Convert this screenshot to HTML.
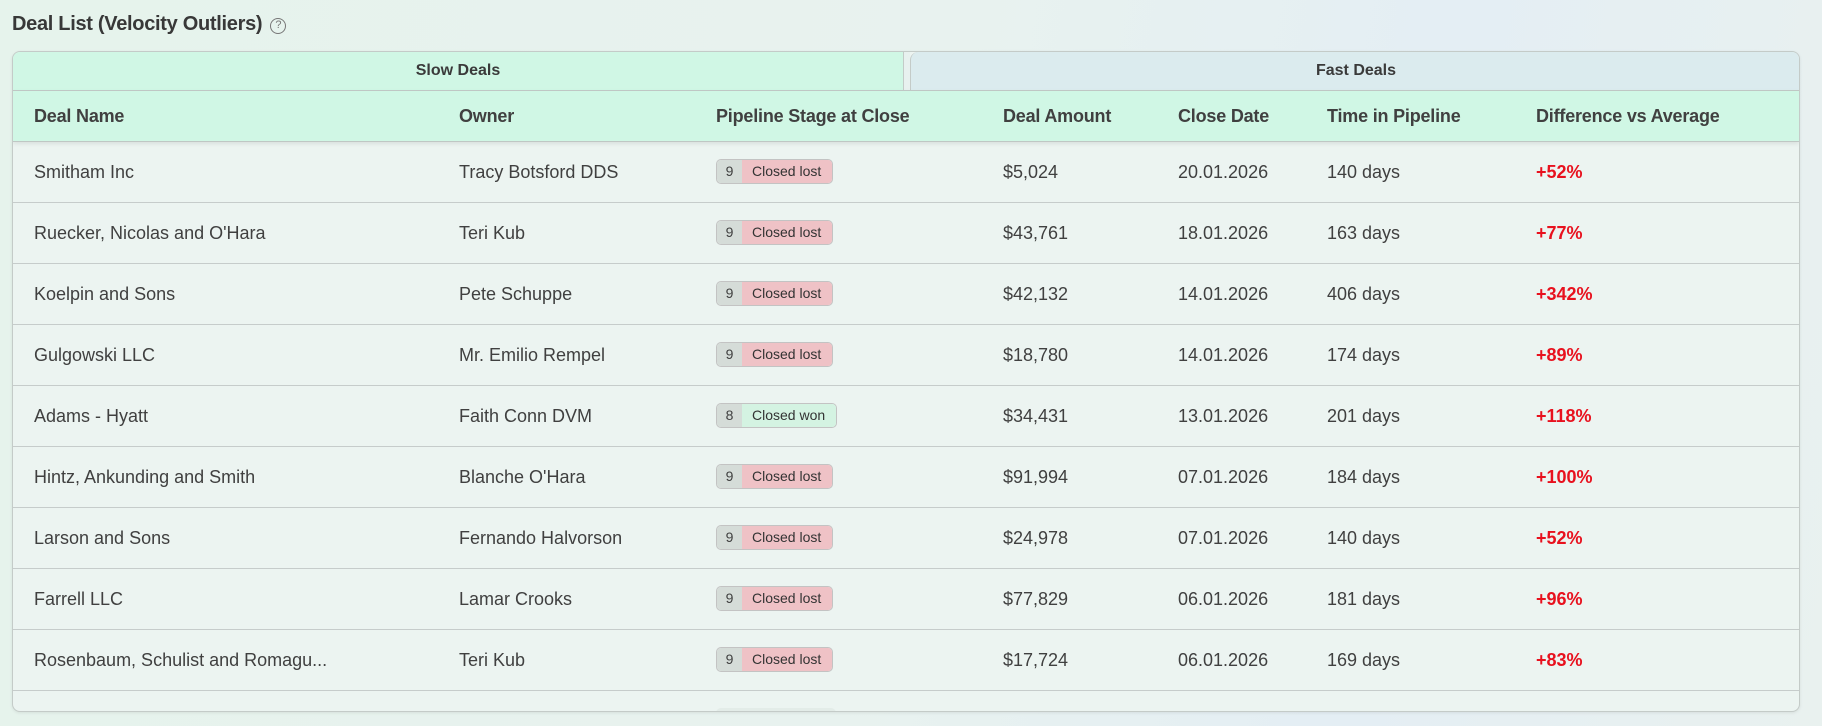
<!DOCTYPE html>
<html><head><meta charset="utf-8"><style>
*{box-sizing:border-box;margin:0;padding:0}
body{width:1822px;height:726px;overflow:hidden;font-family:"Liberation Sans",sans-serif;color:#3a3a3a;background:linear-gradient(100deg,#e6f3ec 0%,#e8f2ef 50%,#e4eef4 75%,#e9f1ef 100%);position:relative}
.title{position:absolute;left:12px;top:13px;font-size:20px;font-weight:bold;color:#383838;letter-spacing:-0.3px}
.q{display:inline-block;width:16px;height:16px;border:1.5px solid #777;border-radius:50%;font-size:11px;text-align:center;line-height:13px;color:#777;font-weight:normal;vertical-align:2px;margin-left:8px}
.card{position:absolute;left:12px;top:51px;width:1788px;height:661px;border:1px solid #c4cbc8;border-radius:8px;background:#ecf4f1;overflow:hidden;box-shadow:0 1px 3px rgba(0,0,0,.08)}
.tab{position:absolute;top:0;height:38px;font-size:16px;font-weight:bold;text-align:center;line-height:38px;color:#3a3a3a}
.t1{left:0;width:891px;background:#d0f7e5;border-right:1px solid #c4cbc8}
.t2{left:897px;width:891px;background:#dbebee;border-left:1px solid #c4cbc8;border-radius:8px 8px 0 0}
.gap{position:absolute;left:891px;top:0;width:6px;height:38px;background:#e8f1ef}
.hdr{position:absolute;left:0;top:38px;width:100%;height:52px;background:#d0f7e5;border-top:1px solid #bfc7c4;border-bottom:1px solid #bfc7c4;box-shadow:0 2px 4px rgba(0,0,0,.08)}
.c{position:absolute;white-space:nowrap}
.hdr .c{top:15px;font-size:18px;font-weight:bold;color:#404040;letter-spacing:-0.2px}
.row{position:absolute;left:0;width:100%;height:61px;border-bottom:1px solid #c6cccb}
.row .c{top:20px;font-size:18px;color:#404040}
.x1{left:21px}.x2{left:446px}.x3{left:703px}.x4{left:990px}.x5{left:1165px}.x6{left:1314px}.x7{left:1523px}
.red{color:#e8111e!important;font-weight:bold}
.b{top:17px!important;height:25px;border:1px solid #c3c3c3;border-radius:5px;overflow:hidden;display:flex;font-size:14px!important;line-height:23px}
.b .n{background:#d5dcd8;width:25px;text-align:center}
.b .l{background:#efc2c6;padding:0 11px 0 10px;color:#333}
.b .w{background:#d4f3e2;padding:0 11px 0 10px;color:#333}
</style></head><body>
<div class="title">Deal List (Velocity Outliers)<span class="q">?</span></div>
<div class="card">
<div class="tab t1">Slow Deals</div><div class="gap"></div><div class="tab t2">Fast Deals</div>
<div class="hdr"><span class="c x1">Deal Name</span><span class="c x2">Owner</span><span class="c x3">Pipeline Stage at Close</span><span class="c x4">Deal Amount</span><span class="c x5">Close Date</span><span class="c x6">Time in Pipeline</span><span class="c x7">Difference vs Average</span></div>

<div class="row" style="top:90px"><span class="c x1">Smitham Inc</span><span class="c x2">Tracy Botsford DDS</span><span class="c x3 b"><span class="n">9</span><span class="l">Closed lost</span></span><span class="c x4">$5,024</span><span class="c x5">20.01.2026</span><span class="c x6">140 days</span><span class="c x7 red">+52%</span></div>
<div class="row" style="top:151px"><span class="c x1">Ruecker, Nicolas and O'Hara</span><span class="c x2">Teri Kub</span><span class="c x3 b"><span class="n">9</span><span class="l">Closed lost</span></span><span class="c x4">$43,761</span><span class="c x5">18.01.2026</span><span class="c x6">163 days</span><span class="c x7 red">+77%</span></div>
<div class="row" style="top:212px"><span class="c x1">Koelpin and Sons</span><span class="c x2">Pete Schuppe</span><span class="c x3 b"><span class="n">9</span><span class="l">Closed lost</span></span><span class="c x4">$42,132</span><span class="c x5">14.01.2026</span><span class="c x6">406 days</span><span class="c x7 red">+342%</span></div>
<div class="row" style="top:273px"><span class="c x1">Gulgowski LLC</span><span class="c x2">Mr. Emilio Rempel</span><span class="c x3 b"><span class="n">9</span><span class="l">Closed lost</span></span><span class="c x4">$18,780</span><span class="c x5">14.01.2026</span><span class="c x6">174 days</span><span class="c x7 red">+89%</span></div>
<div class="row" style="top:334px"><span class="c x1">Adams - Hyatt</span><span class="c x2">Faith Conn DVM</span><span class="c x3 b"><span class="n">8</span><span class="w">Closed won</span></span><span class="c x4">$34,431</span><span class="c x5">13.01.2026</span><span class="c x6">201 days</span><span class="c x7 red">+118%</span></div>
<div class="row" style="top:395px"><span class="c x1">Hintz, Ankunding and Smith</span><span class="c x2">Blanche O'Hara</span><span class="c x3 b"><span class="n">9</span><span class="l">Closed lost</span></span><span class="c x4">$91,994</span><span class="c x5">07.01.2026</span><span class="c x6">184 days</span><span class="c x7 red">+100%</span></div>
<div class="row" style="top:456px"><span class="c x1">Larson and Sons</span><span class="c x2">Fernando Halvorson</span><span class="c x3 b"><span class="n">9</span><span class="l">Closed lost</span></span><span class="c x4">$24,978</span><span class="c x5">07.01.2026</span><span class="c x6">140 days</span><span class="c x7 red">+52%</span></div>
<div class="row" style="top:517px"><span class="c x1">Farrell LLC</span><span class="c x2">Lamar Crooks</span><span class="c x3 b"><span class="n">9</span><span class="l">Closed lost</span></span><span class="c x4">$77,829</span><span class="c x5">06.01.2026</span><span class="c x6">181 days</span><span class="c x7 red">+96%</span></div>
<div class="row" style="top:578px"><span class="c x1">Rosenbaum, Schulist and Romagu...</span><span class="c x2">Teri Kub</span><span class="c x3 b"><span class="n">9</span><span class="l">Closed lost</span></span><span class="c x4">$17,724</span><span class="c x5">06.01.2026</span><span class="c x6">169 days</span><span class="c x7 red">+83%</span></div>
<div class="row" style="top:639px;border:none"><span class="c x3" style="top:17px;width:120px;height:25px;background:#e3ece8;border-radius:5px"></span></div>
</div>
</body></html>
